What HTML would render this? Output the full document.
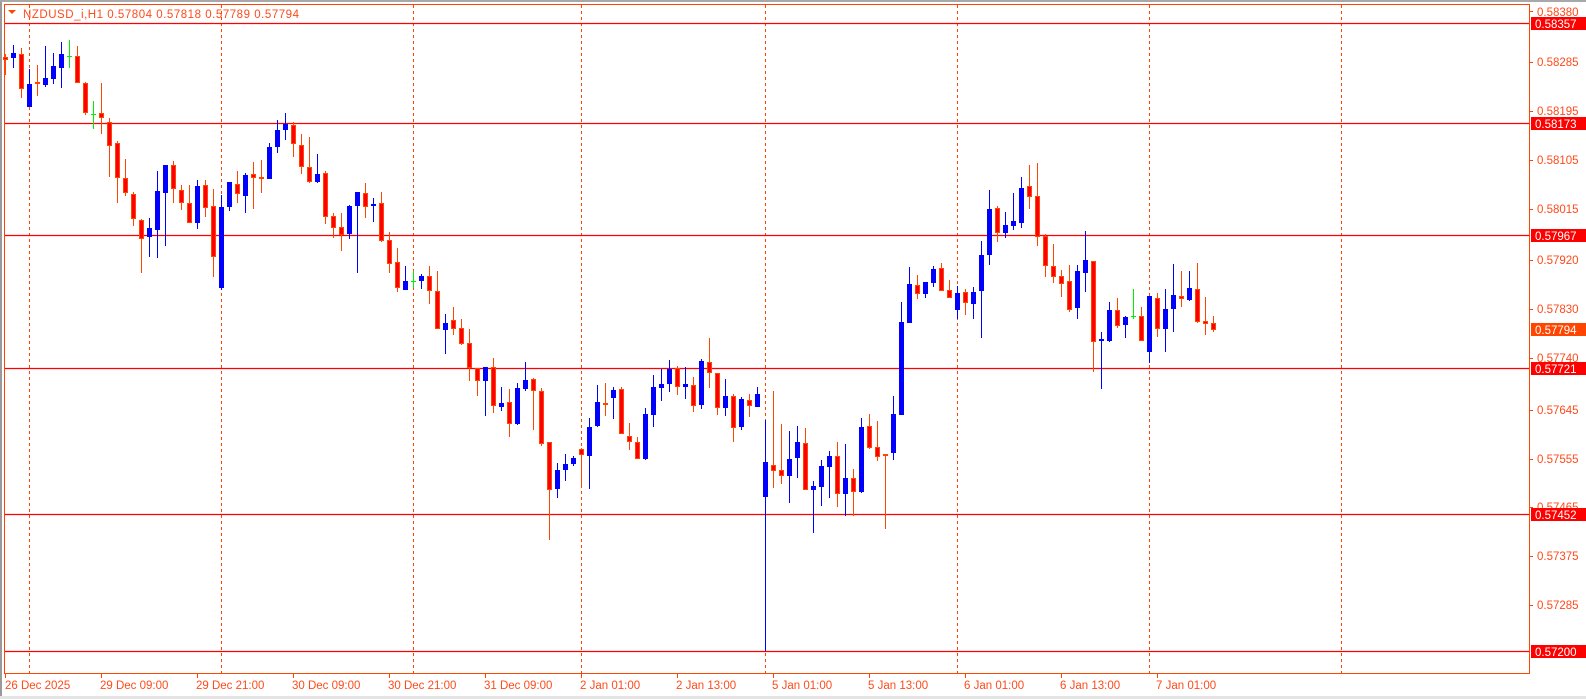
<!DOCTYPE html>
<html><head><meta charset="utf-8"><style>
html,body{margin:0;padding:0;background:#fff;width:1586px;height:699px;overflow:hidden}
svg{display:block}
text{font-family:"Liberation Sans",sans-serif;font-size:11.5px;fill:#ff4a1a}
</style></head><body>
<svg width="1586" height="699" viewBox="0 0 1586 699" xmlns="http://www.w3.org/2000/svg">
<rect x="0" y="0" width="2" height="699" fill="#9a9a9a"/>
<rect x="0" y="0" width="1586" height="2" fill="#a8a8a8"/>
<rect x="0" y="696" width="1586" height="3" fill="#e4e4e4"/>
<g stroke="#ff4500" stroke-width="1" stroke-dasharray="3,3">
<path d="M29.5 5V673M221.5 5V673M413.5 5V673M581.5 5V673M765.5 5V673M957.5 5V673M1149.5 5V673M1341.5 5V673"/>
</g>
<g stroke="#ff0000" stroke-width="1.2">
<path d="M5 23.5H1529M5 123.5H1529M5 235.5H1529M5 368.5H1529M5 514.5H1529M5 651.5H1529"/>
</g>
<rect x="4.5" y="4.5" width="1525" height="669" fill="none" stroke="#ff4500"/>
<g stroke="#ff4500"><path d="M5.5 673V678M101.5 673V678M197.5 673V678M293.5 673V678M389.5 673V678M485.5 673V678M581.5 673V678M677.5 673V678M773.5 673V678M869.5 673V678M965.5 673V678M1061.5 673V678M1157.5 673V678
M1529 11.5H1533M1529 62.5H1533M1529 111.5H1533M1529 160.5H1533M1529 209.5H1533M1529 260.5H1533M1529 309.5H1533M1529 358.5H1533M1529 410.5H1533M1529 459.5H1533M1529 507.5H1533M1529 556.5H1533M1529 605.5H1533"/></g>

<!-- red wicks -->
<path stroke="#ff4500" stroke-width="1" fill="none" d="M5.5 54V75M21.5 48V98M37.5 65V96M77.5 46V83M85.5 82V115M101.5 83V134M109.5 118V177M117.5 141V203M125.5 159V196M133.5 192V226M141.5 219V273M173.5 161V203M181.5 185V210M189.5 185V223M205.5 180V217M213.5 189V277M237.5 171V203M253.5 162V209M261.5 160V193M293.5 122V157M301.5 134V174M309.5 137V183M325.5 171V224M333.5 213V238M341.5 213V251M365.5 183V218M381.5 192V242M389.5 232V273M397.5 248V292M429.5 266V304M437.5 271V329M453.5 307V335M461.5 319V345M469.5 329V381M477.5 368V396M493.5 358V413M509.5 389V437M533.5 378V430M541.5 388V446M549.5 442V540M581.5 448V488M605.5 383V416M621.5 387V434M629.5 423V450M637.5 437V459M677.5 366V395M693.5 377V412M709.5 338V388M717.5 373V415M733.5 394V442M749.5 394V417M773.5 391V488M781.5 424V484M805.5 428V490M837.5 442V507M853.5 469V516M869.5 414V449M877.5 421V461M885.5 455V529M917.5 275V299M941.5 263V291M949.5 280V298M965.5 289V315M997.5 206V242M1029.5 165V209M1037.5 163V246M1045.5 234V277M1053.5 244V283M1061.5 270V297M1069.5 265V312M1093.5 261V372M1117.5 298V328M1141.5 307V341M1157.5 293V337M1181.5 271V307M1197.5 263V323M1205.5 297V335M1213.5 316V332"/>
<!-- red bodies -->
<g fill="#ff0000" stroke="#ff4500" stroke-width="1">
<rect x="3.5" y="57.5" width="4" height="2"/><rect x="19.5" y="54.5" width="4" height="34"/><rect x="35.5" y="82.5" width="4" height="1"/><rect x="75.5" y="56.5" width="4" height="26"/><rect x="83.5" y="83.5" width="4" height="29"/><rect x="99.5" y="113.5" width="4" height="4"/><rect x="107.5" y="122.5" width="4" height="23"/><rect x="115.5" y="143.5" width="4" height="34"/><rect x="123.5" y="178.5" width="4" height="14"/><rect x="131.5" y="194.5" width="4" height="24"/><rect x="139.5" y="220.5" width="4" height="18"/><rect x="171.5" y="165.5" width="4" height="23"/><rect x="179.5" y="190.5" width="4" height="12"/><rect x="187.5" y="203.5" width="4" height="19"/><rect x="203.5" y="185.5" width="4" height="22"/><rect x="211.5" y="206.5" width="4" height="50"/><rect x="235.5" y="184.5" width="4" height="9"/><rect x="251.5" y="174.5" width="4" height="3"/><rect x="259.5" y="177.5" width="4" height="1"/><rect x="291.5" y="125.5" width="4" height="18"/><rect x="299.5" y="145.5" width="4" height="21"/><rect x="307.5" y="167.5" width="4" height="14"/><rect x="323.5" y="173.5" width="4" height="43"/><rect x="331.5" y="216.5" width="4" height="11"/><rect x="339.5" y="227.5" width="4" height="7"/><rect x="363.5" y="193.5" width="4" height="13"/><rect x="379.5" y="203.5" width="4" height="37"/><rect x="387.5" y="240.5" width="4" height="23"/><rect x="395.5" y="262.5" width="4" height="25"/><rect x="427.5" y="276.5" width="4" height="14"/><rect x="435.5" y="291.5" width="4" height="37"/><rect x="451.5" y="320.5" width="4" height="8"/><rect x="459.5" y="328.5" width="4" height="15"/><rect x="467.5" y="343.5" width="4" height="24"/><rect x="475.5" y="368.5" width="4" height="12"/><rect x="491.5" y="367.5" width="4" height="38"/><rect x="507.5" y="402.5" width="4" height="21"/><rect x="531.5" y="379.5" width="4" height="11"/><rect x="539.5" y="391.5" width="4" height="52"/><rect x="547.5" y="442.5" width="4" height="47"/><rect x="579.5" y="449.5" width="4" height="5"/><rect x="603.5" y="403.5" width="4" height="1"/><rect x="619.5" y="389.5" width="4" height="44"/><rect x="627.5" y="436.5" width="4" height="5"/><rect x="635.5" y="442.5" width="4" height="16"/><rect x="675.5" y="368.5" width="4" height="18"/><rect x="691.5" y="385.5" width="4" height="20"/><rect x="707.5" y="362.5" width="4" height="10"/><rect x="715.5" y="373.5" width="4" height="34"/><rect x="731.5" y="396.5" width="4" height="31"/><rect x="747.5" y="400.5" width="4" height="5"/><rect x="771.5" y="465.5" width="4" height="5"/><rect x="779.5" y="470.5" width="4" height="5"/><rect x="803.5" y="443.5" width="4" height="46"/><rect x="835.5" y="456.5" width="4" height="37"/><rect x="851.5" y="478.5" width="4" height="13"/><rect x="867.5" y="426.5" width="4" height="21"/><rect x="875.5" y="447.5" width="4" height="9"/><rect x="883.5" y="454.5" width="4" height="1"/><rect x="915.5" y="285.5" width="4" height="8"/><rect x="939.5" y="268.5" width="4" height="22"/><rect x="947.5" y="290.5" width="4" height="7"/><rect x="963.5" y="292.5" width="4" height="10"/><rect x="995.5" y="208.5" width="4" height="24"/><rect x="1027.5" y="186.5" width="4" height="10"/><rect x="1035.5" y="196.5" width="4" height="40"/><rect x="1043.5" y="236.5" width="4" height="29"/><rect x="1051.5" y="266.5" width="4" height="10"/><rect x="1059.5" y="276.5" width="4" height="7"/><rect x="1067.5" y="281.5" width="4" height="28"/><rect x="1091.5" y="261.5" width="4" height="80"/><rect x="1115.5" y="310.5" width="4" height="15"/><rect x="1139.5" y="316.5" width="4" height="24"/><rect x="1155.5" y="298.5" width="4" height="30"/><rect x="1179.5" y="296.5" width="4" height="2"/><rect x="1195.5" y="289.5" width="4" height="32"/><rect x="1203.5" y="321.5" width="4" height="2"/><rect x="1211.5" y="323.5" width="4" height="6"/>
</g>
<!-- blue wicks -->
<path stroke="#0000ff" stroke-width="1" fill="none" d="M13.5 45V68M29.5 69V107M45.5 46V87M53.5 53V84M61.5 42V88M149.5 218V257M157.5 171V258M165.5 165V246M197.5 180V229M221.5 195V290M229.5 182V211M245.5 173V213M269.5 143V179M277.5 120V153M285.5 113V140M317.5 154V183M349.5 205V239M357.5 192V273M373.5 198V222M405.5 266V290M421.5 274V289M445.5 314V354M485.5 367V416M501.5 387V411M517.5 383V425M525.5 362V391M557.5 463V498M565.5 454V481M573.5 456V466M589.5 418V489M597.5 385V427M613.5 387V419M645.5 408V460M653.5 375V427M661.5 369V401M669.5 360V392M685.5 367V399M701.5 359V409M725.5 379V416M741.5 397V430M757.5 387V407M765.5 420V651M789.5 431V503M797.5 426V478M813.5 481V533M821.5 460V506M829.5 451V498M845.5 444V516M861.5 418V493M893.5 396V460M901.5 302V415M909.5 267V323M925.5 282V298M933.5 266V287M957.5 286V319M973.5 287V319M981.5 241V338M989.5 190V265M1005.5 212V238M1013.5 193V230M1021.5 177V228M1077.5 265V319M1085.5 231V292M1101.5 332V389M1109.5 302V342M1125.5 316V338M1149.5 296V363M1165.5 289V352M1173.5 264V332M1189.5 271V301"/>
<!-- blue bodies -->
<path fill="#0000ff" d="M11 53h5v5h-5zM27 84h5v23h-5zM43 78h5v7h-5zM51 66h5v13h-5zM59 54h5v14h-5zM147 228h5v9h-5zM155 191h5v39h-5zM163 165h5v28h-5zM195 186h5v37h-5zM219 207h5v81h-5zM227 182h5v25h-5zM243 175h5v21h-5zM267 147h5v32h-5zM275 130h5v17h-5zM283 124h5v6h-5zM315 174h5v8h-5zM347 206h5v28h-5zM355 192h5v14h-5zM371 204h5v2h-5zM403 281h5v9h-5zM419 276h5v5h-5zM443 323h5v7h-5zM483 367h5v14h-5zM499 403h5v4h-5zM515 388h5v36h-5zM523 380h5v9h-5zM555 470h5v19h-5zM563 464h5v6h-5zM571 458h5v6h-5zM587 427h5v29h-5zM595 402h5v24h-5zM611 390h5v8h-5zM643 414h5v45h-5zM651 387h5v28h-5zM659 384h5v4h-5zM667 369h5v15h-5zM683 384h5v3h-5zM699 361h5v44h-5zM723 396h5v12h-5zM739 399h5v28h-5zM755 394h5v13h-5zM763 462h5v35h-5zM787 459h5v17h-5zM795 442h5v16h-5zM811 486h5v4h-5zM819 466h5v21h-5zM827 456h5v11h-5zM843 478h5v16h-5zM859 427h5v65h-5zM891 414h5v39h-5zM899 322h5v93h-5zM907 284h5v39h-5zM923 282h5v12h-5zM931 269h5v14h-5zM955 293h5v17h-5zM971 292h5v12h-5zM979 255h5v36h-5zM987 209h5v46h-5zM1003 225h5v8h-5zM1011 221h5v5h-5zM1019 188h5v35h-5zM1075 271h5v37h-5zM1083 260h5v13h-5zM1099 339h5v2h-5zM1107 310h5v31h-5zM1123 317h5v8h-5zM1147 296h5v56h-5zM1163 309h5v20h-5zM1171 295h5v14h-5zM1187 288h5v12h-5z"/>
<!-- green doji -->
<path stroke="#00ee00" stroke-width="1" fill="none" d="M69.5 40V68M67 56.5h5M93.5 101V129M91 114.5h5M413.5 271V288M411 281.5h5M1133.5 289V319M1131 316.5h5"/>

<!-- title -->
<path d="M8 10h8l-4 4z" fill="#ff4500"/>
<text x="23" y="18" textLength="276" lengthAdjust="spacing">NZDUSD_i,H1  0.57804 0.57818 0.57789 0.57794</text>

<!-- right axis labels -->
<text x="1537" y="16">0.58380</text>
<text x="1537" y="66">0.58285</text>
<text x="1537" y="115">0.58195</text>
<text x="1537" y="164">0.58105</text>
<text x="1537" y="213">0.58015</text>
<text x="1537" y="264">0.57920</text>
<text x="1537" y="313">0.57830</text>
<text x="1537" y="362">0.57740</text>
<text x="1537" y="414">0.57645</text>
<text x="1537" y="463">0.57555</text>
<text x="1537" y="511">0.57465</text>
<text x="1537" y="560">0.57375</text>
<text x="1537" y="609">0.57285</text>
<g>
<rect x="1531" y="17" width="55" height="13" fill="#ff0000"/>
<rect x="1531" y="117" width="55" height="13" fill="#ff0000"/>
<rect x="1531" y="229" width="55" height="13" fill="#ff0000"/>
<rect x="1531" y="323" width="55" height="13" fill="#ff4500"/>
<rect x="1531" y="362" width="55" height="13" fill="#ff0000"/>
<rect x="1531" y="508" width="55" height="13" fill="#ff0000"/>
<rect x="1531" y="645" width="55" height="13" fill="#ff0000"/>
</g>
<g>
<text x="1535" y="28" style="fill:#fff">0.58357</text>
<text x="1535" y="128" style="fill:#fff">0.58173</text>
<text x="1535" y="240" style="fill:#fff">0.57967</text>
<text x="1535" y="334" style="fill:#fff">0.57794</text>
<text x="1535" y="373" style="fill:#fff">0.57721</text>
<text x="1535" y="519" style="fill:#fff">0.57452</text>
<text x="1535" y="656" style="fill:#fff">0.57200</text>
</g>

<!-- bottom labels -->
<text x="5" y="689">26 Dec 2025</text>
<text x="100" y="689">29 Dec 09:00</text>
<text x="196" y="689">29 Dec 21:00</text>
<text x="292" y="689">30 Dec 09:00</text>
<text x="388" y="689">30 Dec 21:00</text>
<text x="484" y="689">31 Dec 09:00</text>
<text x="580" y="689">2 Jan 01:00</text>
<text x="676" y="689">2 Jan 13:00</text>
<text x="772" y="689">5 Jan 01:00</text>
<text x="868" y="689">5 Jan 13:00</text>
<text x="964" y="689">6 Jan 01:00</text>
<text x="1060" y="689">6 Jan 13:00</text>
<text x="1156" y="689">7 Jan 01:00</text>
</svg>
</body></html>
